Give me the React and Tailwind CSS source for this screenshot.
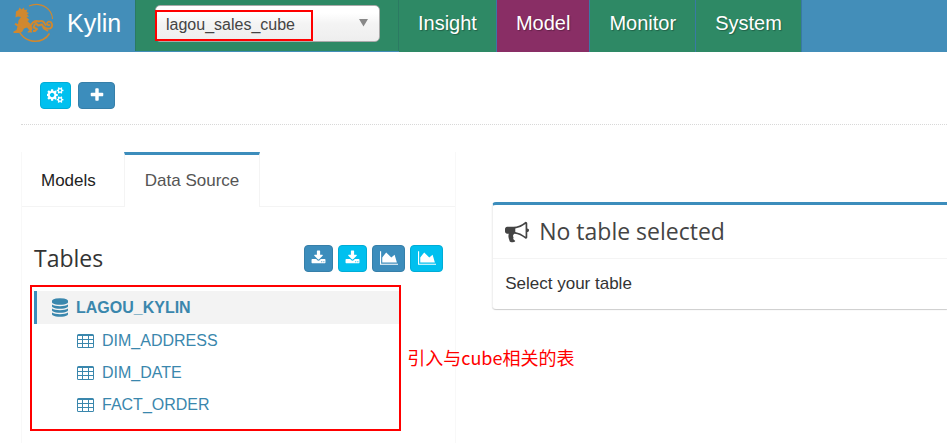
import React from "react";

const SANS = "font-['Liberation_Sans',Arial,sans-serif]";
const HEADING = "font-['Open_Sans','Noto_Sans',sans-serif]";

const ICONS = {
  plus: [1792, "M1600 736v192q0 40-28 68t-68 28h-416v416q0 40-28 68t-68 28h-192q-40 0-68-28t-28-68v-416h-416q-40 0-68-28t-28-68v-192q0-40 28-68t68-28h416v-416q0-40 28-68t68-28h192q40 0 68 28t28 68v416h416q40 0 68 28t28 68z"],
  download: [1792, "M1344 1344q0-26-19-45t-45-19-45 19-19 45 19 45 45 19 45-19 19-45zm256 0q0-26-19-45t-45-19-45 19-19 45 19 45 45 19 45-19 19-45zm128-224v320q0 40-28 68t-68 28h-1472q-40 0-68-28t-28-68v-320q0-40 28-68t68-28h465l135 136q58 56 136 56t136-56l136-136h464q40 0 68 28t28 68zm-325-569q17 41-14 70l-448 448q-18 19-45 19t-45-19l-448-448q-31-29-14-70 17-39 59-39h256v-448q0-26 19-45t45-19h256q26 0 45 19t19 45v448h256q42 0 59 39z"],
  chart: [2048, "M2048 1536v128h-2048v-1536h128v1408h1920zm-384-1024l256 896h-1664v-576l448-576 576 576z"],
  bullhorn: [1792, "M1664 640q53 0 90.5 37.5t37.5 90.5-37.5 90.5-90.5 37.5v384q0 52-38 90t-90 38q-417-347-812-380-58 19-91 66t-31 100.5 40 92.5q-20 33-23 65.5t6 58 33.5 55 48 50 61.5 50.5q-29 58-111.5 83t-168.5 11.5-132-55.5q-7-23-29.5-87.5t-32-94.5-23-89-15-101 3.5-98.5 22-110.5h-122q-66 0-113-47t-47-113v-192q0-66 47-113t113-47h480q435 0 896-384 52 0 90 38t38 90v384zm-128 604v-954q-394 302-768 343v270q377 42 768 341z"],
  database: [1536, "M768 768q237 0 443-43t325-127v170q0 69-103 128t-280 93.5-385 34.5-385-34.5-280-93.5-103-128v-170q119 84 325 127t443 43zm0 768q237 0 443-43t325-127v170q0 69-103 128t-280 93.5-385 34.5-385-34.5-280-93.5-103-128v-170q119 84 325 127t443 43zm0-384q237 0 443-43t325-127v170q0 69-103 128t-280 93.5-385 34.5-385-34.5-280-93.5-103-128v-170q119 84 325 127t443 43zm0-1152q208 0 385 34.5t280 93.5 103 128v128q0 69-103 128t-280 93.5-385 34.5-385-34.5-280-93.5-103-128v-128q0-69 103-128t280-93.5 385-34.5z"],
  cogs: [1920, "M832 896q0-106-75-181t-181-75-181 75-75 181 75 181 181 75 181-75 75-181zm768 512q0-52-38-90t-90-38-90 38-38 90q0 53 37.5 90.5t90.5 37.5 90.5-37.5 37.5-90.5zm0-1024q0-52-38-90t-90-38-90 38-38 90q0 53 37.5 90.5t90.5 37.5 90.5-37.5 37.5-90.5zm-384 421v185q0 10-7 19.5t-16 10.5l-155 24q-11 35-32 76 34 48 90 115 7 11 7 20 0 12-7 19-23 30-82.5 89.5t-78.5 59.5q-11 0-21-7l-115-90q-37 19-77 31-11 108-23 155-7 24-30 24h-186q-11 0-20-7.5t-10-17.5l-23-153q-34-10-75-31l-118 89q-7 7-20 7-11 0-21-8-144-133-144-160 0-9 7-19 10-14 41-53t47-61q-23-44-35-82l-152-24q-10-1-17-9.5t-7-19.5v-185q0-10 7-19.5t16-10.5l155-24q11-35 32-76-34-48-90-115-7-11-7-20 0-12 7-20 22-30 82-89t79-59q11 0 21 7l115 90q34-18 77-32 11-108 23-154 7-24 30-24h186q11 0 20 7.5t10 17.5l23 153q34 10 75 31l118-89q8-7 20-7 11 0 21 8 144 133 144 160 0 8-7 19-12 16-42 54t-45 60q23 48 34 82l152 23q10 2 17 10.5t7 19.5zm640 533v140q0 16-149 31-12 27-30 52 51 113 51 138 0 4-4 7-122 71-124 71-8 0-46-47t-52-68q-20 2-30 2t-30-2q-14 21-52 68t-46 47q-2 0-124-71-4-3-4-7 0-25 51-138-18-25-30-52-149-15-149-31v-140q0-16 149-31 13-29 30-52-51-113-51-138 0-4 4-7 4-2 35-20t59-34 30-16q8 0 46 46.5t52 67.5q20-2 30-2t30 2q51-71 92-112l6-2q4 0 124 70 4 3 4 7 0 25-51 138 17 23 30 52 149 15 149 31zm0-1024v140q0 16-149 31-12 27-30 52 51 113 51 138 0 4-4 7-122 71-124 71-8 0-46-47t-52-68q-20 2-30 2t-30-2q-14 21-52 68t-46 47q-2 0-124-71-4-3-4-7 0-25 51-138-18-25-30-52-149-15-149-31v-140q0-16 149-31 13-29 30-52-51-113-51-138 0-4 4-7 4-2 35-20t59-34 30-16q8 0 46 46.5t52 67.5q20-2 30-2t30 2q51-71 92-112l6-2q4 0 124 70 4 3 4 7 0 25-51 138 17 23 30 52 149 15 149 31z"],
};

function Icon({ name, className }) {
  const [width, d] = ICONS[name];
  return (
    <svg viewBox={`0 0 ${width} 1792`} className={className} fill="currentColor" aria-hidden="true">
      <path d={d} />
    </svg>
  );
}

function TableIcon() {
  return (
    <svg viewBox="0 0 17 14" className="h-[14px] w-[17px]" fill="currentColor" aria-hidden="true">
      <path
        fillRule="evenodd"
        d="M1.500 0h14A1.500 1.500 0 0 1 17 1.500v11a1.500 1.500 0 0 1-1.500 1.500h-14A1.500 1.500 0 0 1 0 12.500v-11A1.500 1.500 0 0 1 1.500 0zM1 2h4v3h-4zM6 2h5v3h-5zM12 2h4v3h-4zM1 6h4v3h-4zM6 6h5v3h-5zM12 6h4v3h-4zM1 10h4v3h-4zM6 10h5v3h-5zM12 10h4v3h-4z"
      />
    </svg>
  );
}

function Logo() {
  return (
    <svg viewBox="0 0 44 40" className="h-10 w-11" fill="none" stroke="#d0882f" aria-hidden="true">
      <path d="M17 3C25-.5 34 2 38.500 9c1.500 2.500 2 4.500 2 7" strokeWidth="1.200" />
      <path d="M7.500 29C12 37.500 23 40.500 31 36.500c3-1.500 5-3.500 6.500-6" strokeWidth="1.600" />
      <g fill="#d0882f" stroke="none">
        <path d="M4 8.500l2.500-1.500 1-2.500 2 2 2.500-2 .5 2.500 3-.5-1 2.500 2.500 1-2 1.500 2 2-2.500.5 3 3-2 1 3 3 2 5-1 1.500 1 2h-5l.5-1.500 1.500-.5-2.500-3-3 1-2 3.500-3.500 1h-5v-1.500l3-1.500 1-3.500-3-2 1-1.500 2.500 1 .5-3.500 2.500-3.500-3-.5-2.500 1z" />
      </g>
      <path d="M18 25c1-5.500 5-8 9-6.500M23 19l3 3.500 4-1 2 4 4 2.500M23 21l-1.500 3.500 3.500 1.500-2 2h-2" strokeWidth="2" strokeLinejoin="round" />
      <path d="M32 24c5 3.500 9 1 8-3-.800-3-5-3-5-.5 0 1.500 1.500 2 2.500 1.500M27 18.500c3-1.500 5 0 6.500 3.500" strokeWidth="1.800" strokeLinecap="round" />
    </svg>
  );
}

const NAV = [
  { label: "Insight", bg: "bg-[#2e8965]" },
  { label: "Model", bg: "bg-[#892e65]" },
  { label: "Monitor", bg: "bg-[#2e8965]" },
  { label: "System", bg: "bg-[#2e8965]" },
];

function Header() {
  return (
    <header className="flex h-[52px] bg-[#438eb9] text-white">
      <a href="#" className="flex w-[135px] shrink-0 items-center pb-[6px] pl-3 text-[25px]">
        <Logo />
        <span className="ml-[11px] leading-8">Kylin</span>
      </a>
      <div className="h-[51px] w-[264px] shrink-0 border-x border-[#2b7a62] bg-[#2e8965] pt-[5px] pl-[19px]">
        <div className="relative h-[37px] w-[225px]">
          <select
            aria-label="Project"
            className="h-full w-full appearance-none rounded-[5px] border border-[#aaa] bg-linear-to-b from-white from-20% via-[#f4f4f4] to-[#eee] px-[10px] pt-[2px] text-base text-[#444]"
          >
            <option>lagou_sales_cube</option>
          </select>
          <svg viewBox="0 0 9 8" className="pointer-events-none absolute top-[14px] right-[12px] h-2 w-[9px]" fill="#888" aria-hidden="true">
            <path d="M0 0h9L4.500 7.500z" />
          </svg>
          <div className="pointer-events-none absolute top-[5px] left-0 h-[31px] w-[158px] border-2 border-[#f00]" />
        </div>
      </div>
      <nav className="flex text-xl [text-shadow:1px_1px_1px_rgba(0,0,0,0.3)]">
        {NAV.map((item) => (
          <a key={item.label} href="#" className={`flex items-center border-r border-[#3979a5] px-[19px] pb-[6px] ${item.bg}`}>
            {item.label}
          </a>
        ))}
      </nav>
    </header>
  );
}

const PRIMARY = "border-[#367fa9] bg-[#3c8dbc]";
const INFO = "border-[#00acd6] bg-[#00c0ef]";

function IconButton({ label, icon, tone, size, iconClass }) {
  return (
    <button type="button" aria-label={label} className={`flex h-[27px] items-center justify-center rounded-[4px] border text-white ${tone} ${size}`}>
      <Icon name={icon} className={iconClass} />
    </button>
  );
}

const TABLES = ["DIM_ADDRESS", "DIM_DATE", "FACT_ORDER"];

function SourcePanel() {
  return (
    <section className="flex w-[47%] shrink-0 flex-col border-x border-[#f8f8f8]">
      <div className="flex h-[55px] text-[17px] text-[#444]" role="tablist">
        <button type="button" role="tab" aria-selected="false" className="border-b border-[#f4f4f4] pt-1 pr-7 pl-[19px] text-[#222]">
          Models
        </button>
        <button type="button" role="tab" aria-selected="true" className="border-x border-t-3 border-x-[#f4f4f4] border-t-[#3c8dbc] px-5 text-[#555]">
          Data Source
        </button>
        <div className="flex-1 border-b border-[#f4f4f4]" />
      </div>
      <div className="flex items-center justify-between pt-[35px] pr-3 pl-3">
        <h3 className={`text-[23px] leading-8 text-[#333] ${HEADING}`}>Tables</h3>
        <div className="flex gap-[5px]">
          <IconButton label="Load table" icon="download" tone={PRIMARY} size="w-[29px]" iconClass="h-4 w-[15px]" />
          <IconButton label="Load table from tree" icon="download" tone={INFO} size="w-[29px]" iconClass="h-4 w-[15px]" />
          <IconButton label="Add streaming table" icon="chart" tone={PRIMARY} size="w-[33px]" iconClass="h-4 w-[18px]" />
          <IconButton label="Add streaming table v2" icon="chart" tone={INFO} size="w-[33px]" iconClass="h-4 w-[18px]" />
        </div>
      </div>
      <div className="relative mt-[11px] mr-[54px] ml-2 border-2 border-[#f00] pt-1 pl-[2px] text-base text-[#3a87ad]">
        <a href="#" className="flex h-[33px] items-center border-l-3 border-[#3c8dbc] bg-[#f3f3f3] pl-[15px] font-bold">
          <Icon name="database" className="h-[19px] w-4" />
          <span className="ml-2">LAGOU_KYLIN</span>
        </a>
        <ul className="pt-px pb-2">
          {TABLES.map((name) => (
            <li key={name}>
              <a href="#" className="flex h-8 items-center pl-[43px]">
                <TableIcon />
                <span className="ml-2">{name}</span>
              </a>
            </li>
          ))}
        </ul>
        <p className="absolute top-[58px] left-full ml-2 font-['Noto_Sans_CJK_SC',sans-serif] text-[18px] leading-6 whitespace-nowrap text-[#f00]">
          引入与cube相关的表
        </p>
      </div>
      <div className="flex-1" />
    </section>
  );
}

function DetailPanel() {
  return (
    <section className="mt-[50px] ml-9 flex-1 self-start rounded-l-[4px] border-t-3 border-l border-t-[#3c8dbc] border-l-[#f0f0f0] shadow-[0_1px_1px_rgba(0,0,0,0.2)]">
      <h3 className={`flex h-[54px] items-center border-b border-[#f4f4f4] pl-3 text-[23px] text-[#444] ${HEADING}`}>
        <Icon name="bullhorn" className="size-6" />
        <span className="ml-[10px]">No table selected</span>
      </h3>
      <p className="py-3 pl-3 text-[17px] leading-[26px] text-[#333]">Select your table</p>
    </section>
  );
}

export default function App() {
  return (
    <div className={`flex min-h-screen flex-col overflow-x-hidden bg-white ${SANS}`}>
      <Header />
      <main className="flex flex-1 flex-col pl-[21px]">
        <div className="flex gap-[7px] border-b border-dotted border-[#d8d8d8] pt-[30px] pb-[15px] pl-[19px]">
          <IconButton label="Manage project" icon="cogs" tone={INFO} size="w-[31px]" iconClass="mb-[2px] h-4 w-[17px]" />
          <IconButton label="Add project" icon="plus" tone={PRIMARY} size="w-[37px]" iconClass="mb-[2px] size-4" />
        </div>
        <div className="flex flex-1 pt-[27px]">
          <SourcePanel />
          <DetailPanel />
        </div>
      </main>
    </div>
  );
}
